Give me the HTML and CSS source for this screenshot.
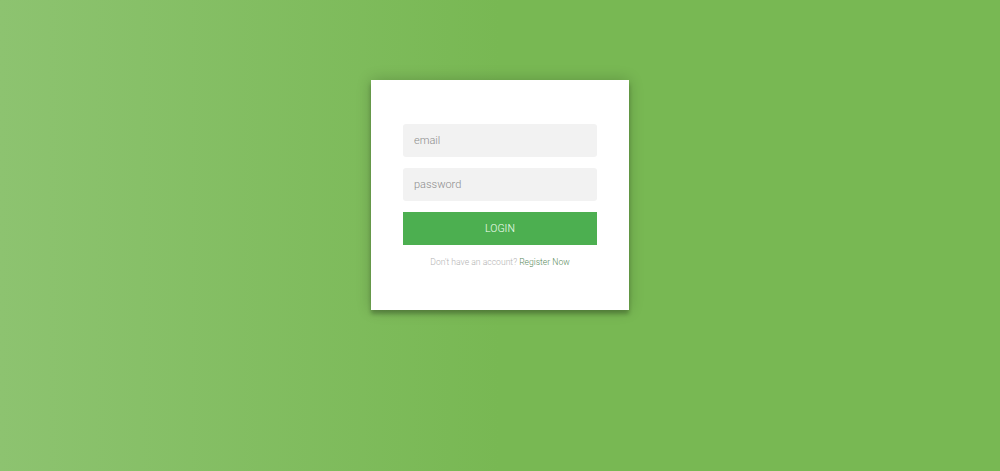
FILE: index.html
```html
<!DOCTYPE html>
<html>
<head>
<meta charset="utf-8">
<link rel="stylesheet" href="styles.css">
</head>
<body>
<div class="page">
  <div class="form">
    <form class="login-form">
      <input type="text" placeholder="email">
      <input type="password" placeholder="password">
      <button type="button">login</button>
      <p class="message">Don't have an account? <a href="#">Register Now</a></p>
    </form>
  </div>
</div>
</body>
</html>
```
FILE: styles.css
```css
html, body {
  margin: 0;
  height: 100%;
}
body {
  background: #76b852;
  background: linear-gradient(to left, #78b853 0%, #78b853 50%, #8dc370 100%);
  font-family: Roboto, "Noto Sans", sans-serif;
  font-weight: 300;
}
.page {
  display: flex;
  justify-content: center;
  padding-top: 80px;
}
.form {
  width: 258px;
  box-sizing: border-box;
  background: #fff;
  padding: 44px 32px 32px;
  height: 230px;
  box-shadow: 0 0 14px rgba(0,0,0,0.2), 0 4px 4px rgba(0,0,0,0.24);
}
.login-form {
  display: flex;
  flex-direction: column;
  margin: 0;
}
.login-form input {
  font-family: Roboto, sans-serif;
  font-weight: 300;
  outline: 0;
  background: #f2f2f2;
  width: 100%;
  border: 0;
  margin: 0 0 11px;
  padding: 0 11px;
  height: 33px;
  box-sizing: border-box;
  font-size: 11px;
  border-radius: 3px;
  color: #333;
}
.login-form input::placeholder {
  color: #8c8c8c;
}
.login-form button {
  font-family: Roboto, sans-serif;
  font-weight: 300;
  text-transform: uppercase;
  outline: 0;
  background: #4caf50;
  width: 100%;
  border: 0;
  height: 33px;
  padding: 0;
  color: #f4fff4;
  font-size: 10.5px;
  cursor: pointer;
}
.message {
  margin: 12px 0 0;
  color: #b3b3b3;
  font-size: 8.6px;
  font-weight: 300;
  text-align: center;
  line-height: 10px;
}
.message a {
  color: #5a8a5c;
  text-decoration: none;
}
```
